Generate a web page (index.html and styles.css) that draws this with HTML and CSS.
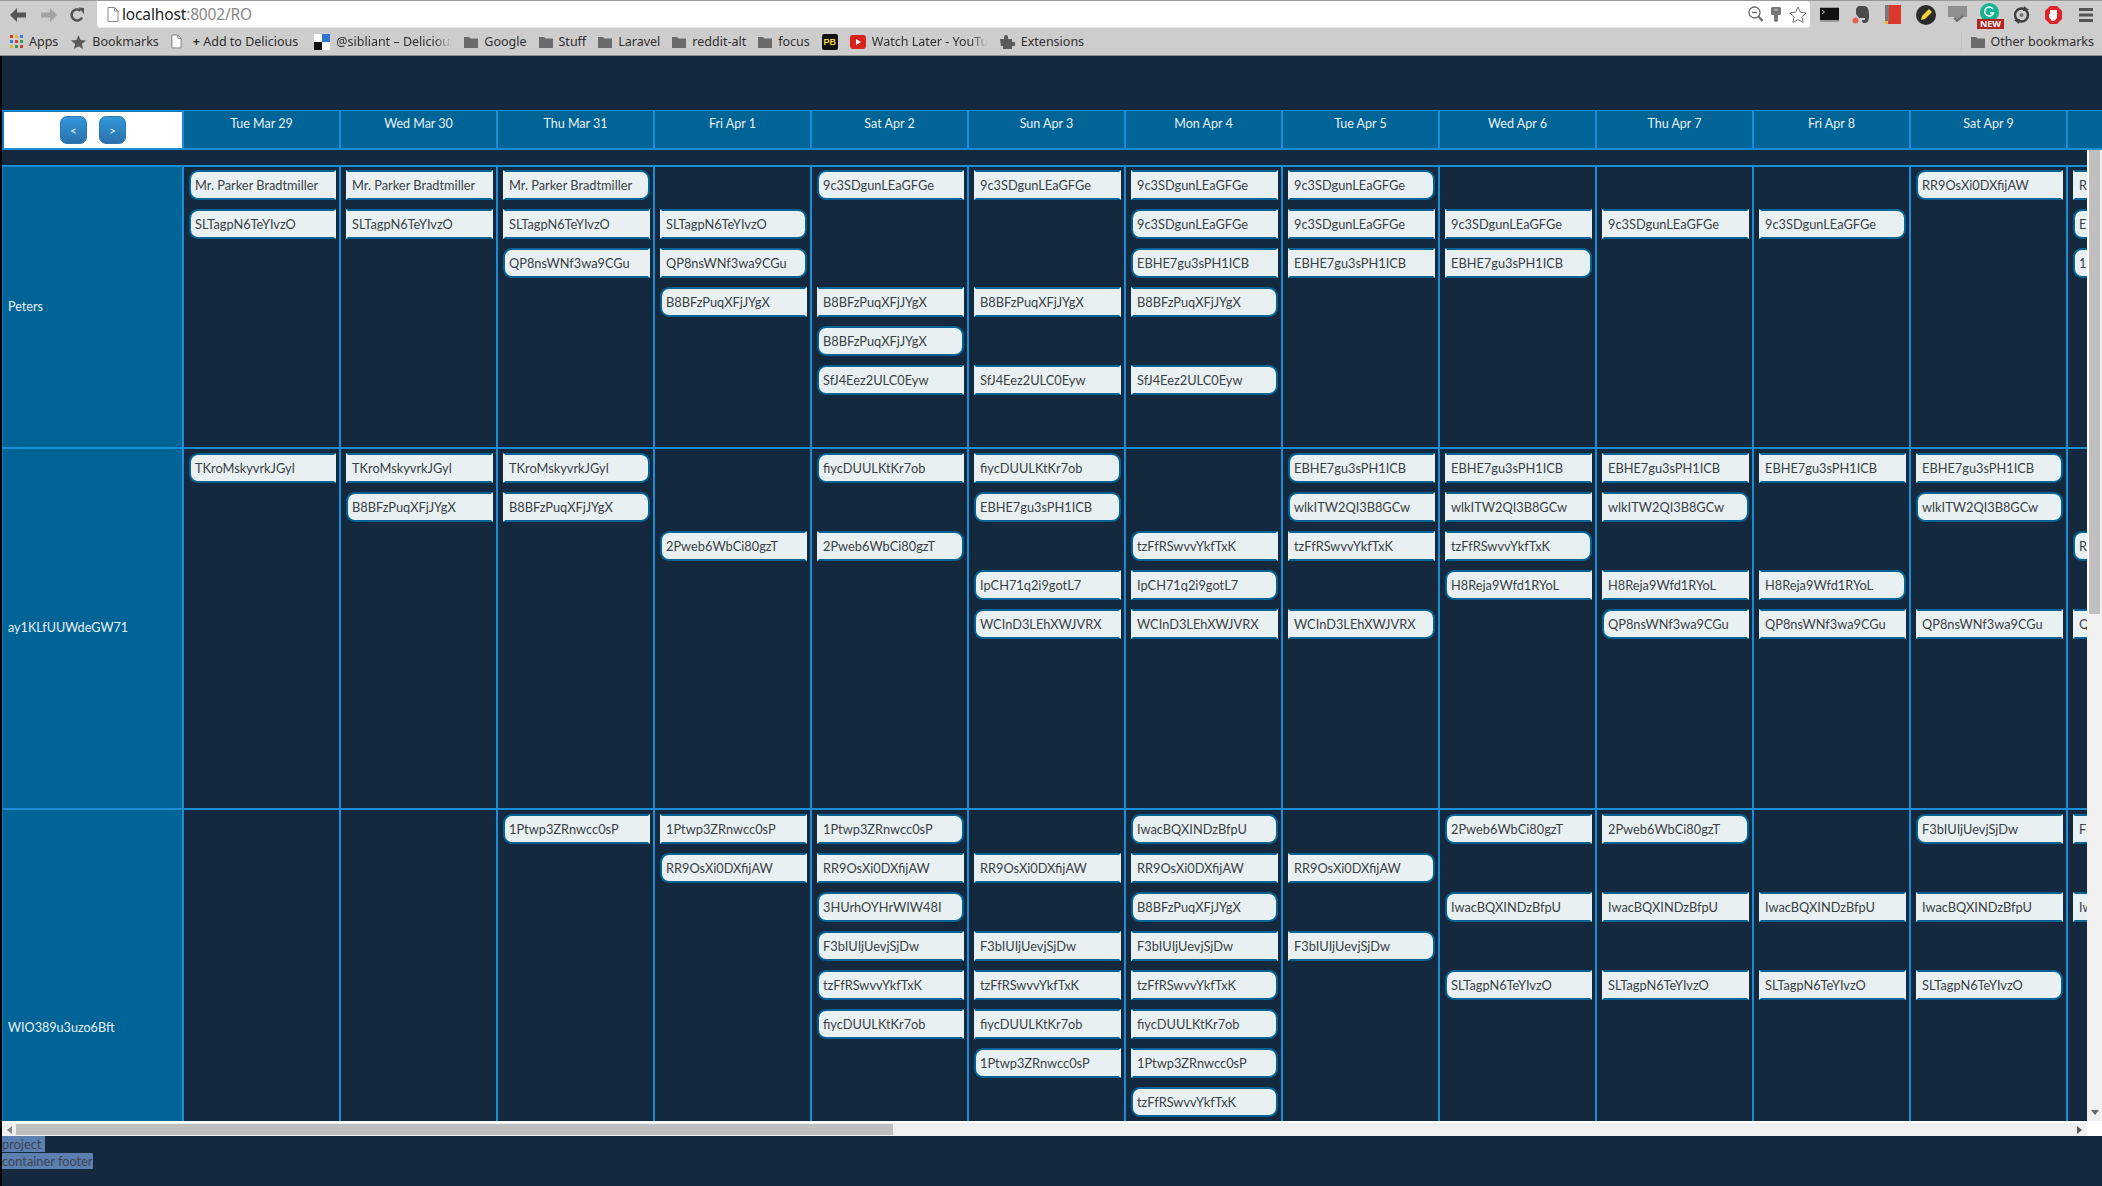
FILE: index.html
```html
<!DOCTYPE html>
<html lang="en">
<head>
  <meta charset="UTF-8" />
  <title>localhost:8002/RO</title>
  <link rel="stylesheet" href="styles.css">
</head>
<body>

  <svg class="defs" width="0" height="0">
    <symbol id="folder" viewBox="0 0 14 14"><path d="M0 2h5l1.500 1.500H14V13H0z" fill="#6b6b6b"/></symbol>
  </svg>

  <div class="browser">
    <div class="toolbar">
      <svg class="nav" width="18" height="16" viewBox="0 0 18 16"><path d="M1 8l7-7v4.500h9v5H8V15z" fill="#555"/></svg>
      <svg class="nav" width="18" height="16" viewBox="0 0 18 16"><path d="M17 8l-7-7v4.500H1v5h9V15z" fill="#a3a3a3"/></svg>
      <svg class="nav" width="16" height="16" viewBox="0 0 16 16"><path d="M13 10.500A5.500 5.500 0 1 1 11.500 3.600" fill="none" stroke="#555" stroke-width="2.600"/><path d="M9.500 0.500L15 1v6z" fill="#555"/></svg>
      <div class="omnibox">
        <svg width="12" height="15" viewBox="0 0 12 15"><path d="M1 .5h6.500L11 4v10.500H1z" fill="#fff" stroke="#888"/><path d="M7.500 .5V4H11" fill="none" stroke="#888"/></svg>
        <span class="url">localhost<span class="url-rest">:8002/RO</span></span>
        <span class="omni-right">
          <svg width="15" height="16" viewBox="0 0 15 16"><circle cx="6.500" cy="6.500" r="5.500" fill="none" stroke="#666" stroke-width="1.300"/><path d="M4 6.500h5" stroke="#666" stroke-width="1.300"/><path d="M10.500 10.500L14.500 15" stroke="#666" stroke-width="2"/></svg>
          <svg width="10" height="15" viewBox="0 0 10 15"><path d="M1 0h8l1 1v6l-1 1H7v6l-2 1-2-1V8H1L0 7V1z" fill="#777"/><path d="M3 2h4v2H3z" fill="#aaa"/></svg>
          <svg width="18" height="17" viewBox="0 0 18 17"><path d="M9 1l2.400 5.300 5.800.6-4.300 3.900 1.200 5.700L9 13.600l-5.100 2.900 1.200-5.700L.8 6.900l5.800-.6z" fill="#fff" stroke="#777"/></svg>
        </span>
      </div>
      <div class="extensions">
        <svg width="19" height="15" viewBox="0 0 19 15"><rect width="19" height="15" fill="#9a9a9a"/><rect y="1" width="19" height="12" fill="#111"/><path d="M2 3l2.500 2L2 7" fill="none" stroke="#ccc"/></svg>
        <svg width="18" height="19" viewBox="0 0 18 19"><path d="M6 1h6c4 0 5 4 5 9s-1 8-4 8-3-2-3-3h3v-2H7L4 9V4z" fill="#4a4a4a"/><circle cx="3.500" cy="15.500" r="3" fill="#e5604f"/></svg>
        <svg width="16" height="20" viewBox="0 0 16 20"><rect width="4" height="18" fill="#777"/><rect x="4" width="12" height="18" fill="#d9382a"/><rect y="18" width="16" height="1" fill="#d9382a"/><rect y="16" width="3" height="3" fill="#e8b92b"/></svg>
        <svg width="20" height="20" viewBox="0 0 20 20"><circle cx="10" cy="10" r="10" fill="#2b2b2b"/><path d="M5 15l1-4 7-7 3 3-7 7z" fill="#f2d33c"/></svg>
        <svg width="19" height="18" viewBox="0 0 19 18"><path d="M0 0h19v11h-6l-3 4-4-4H0z" fill="#8f8f8f"/><path d="M6 12l3 3 6-5" fill="none" stroke="#6d6d6d" stroke-width="2"/></svg>
        <span class="grammarly">
          <svg width="19" height="19" viewBox="0 0 19 19"><circle cx="9.500" cy="9.500" r="9.500" fill="#15b392"/><path d="M13 6a4.500 4.500 0 1 0 .5 4H10" fill="none" stroke="#fff" stroke-width="1.500"/></svg>
          <span class="new-badge">NEW</span>
        </span>
        <svg width="17" height="18" viewBox="0 0 17 18"><circle cx="8.500" cy="9" r="6.500" fill="none" stroke="#3f3f3f" stroke-width="2.400"/><circle cx="8.500" cy="9" r="2" fill="#777"/><path d="M11 0l5 4-6 1zM6 18l-5-4 6-1z" fill="#3f3f3f"/></svg>
        <svg width="17" height="18" viewBox="0 0 17 18"><path d="M5 0h7l5 5v8l-5 5H5l-5-5V5z" fill="#e0222a"/><path d="M5 8V4h7v8l-3 3H7L4 11V8z" fill="#fff"/></svg>
        <svg width="14" height="14" viewBox="0 0 14 14"><path d="M0 0h14v3H0zM0 5.500h14v3H0zM0 11h14v3H0z" fill="#555"/></svg>
      </div>
    </div>

    <div class="bookmarks">
      <a class="bm">
        <svg width="13" height="13" viewBox="0 0 13 13"><path d="M0 0h3v3H0z" fill="#d9382a"/><path d="M5 0h3v3H5z" fill="#e8b92b"/><path d="M10 0h3v3h-3z" fill="#3d7fe0"/><path d="M0 5h3v3H0z" fill="#3d7fe0"/><path d="M5 5h3v3H5z" fill="#d9382a"/><path d="M10 5h3v3h-3z" fill="#2d9e4f"/><path d="M0 10h3v3H0z" fill="#e8b92b"/><path d="M5 10h3v3H5z" fill="#2d9e4f"/><path d="M10 10h3v3h-3z" fill="#d9382a"/></svg>
        Apps
      </a>
      <a class="bm">
        <svg width="15" height="14" viewBox="0 0 15 14"><path d="M7.500 0l2 5 5.500.4-4.200 3.500 1.300 5.100-4.600-2.800L2.900 14l1.300-5.100L0 5.400 5.500 5z" fill="#5a5a5a"/></svg>
        Bookmarks
      </a>
      <a class="bm">
        <svg width="11" height="15" viewBox="0 0 12 15"><path d="M1 .5h6.500L11 4v10.500H1z" fill="#fff" stroke="#777"/><path d="M7.500 .5V4H11" fill="none" stroke="#777"/></svg>
        <span class="bm-plus"><b>+</b> Add to Delicious</span>
      </a>
      <a class="bm">
        <svg width="16" height="16" viewBox="0 0 16 16"><rect width="8" height="8" fill="#fff"/><rect x="8" width="8" height="8" fill="#3274d1"/><rect y="8" width="8" height="8" fill="#111"/><rect x="8" y="8" width="8" height="8" fill="#fff"/></svg>
        <span class="bm-fade">@sibliant – Delicious</span>
      </a>
      <a class="bm"><svg width="14" height="14"><use href="#folder"/></svg>Google</a>
      <a class="bm"><svg width="14" height="14"><use href="#folder"/></svg>Stuff</a>
      <a class="bm"><svg width="14" height="14"><use href="#folder"/></svg>Laravel</a>
      <a class="bm"><svg width="14" height="14"><use href="#folder"/></svg>reddit-alt</a>
      <a class="bm"><svg width="14" height="14"><use href="#folder"/></svg>focus</a>
      <a class="bm"><span class="pb">PB</span></a>
      <a class="bm">
        <svg width="16" height="14" viewBox="0 0 16 14"><rect width="16" height="14" rx="3" fill="#d9231f"/><path d="M6 4l5 3-5 3z" fill="#fff"/></svg>
        <span class="bm-fade">Watch Later - YouTube</span>
      </a>
      <a class="bm">
        <svg width="15" height="15" viewBox="0 0 15 15"><path d="M0 5h4V3a2 2 0 0 1 4 0v2h4v3h2a2 2 0 0 1 0 4h-2v3H3v-3H1z" fill="#5a5a5a"/></svg>
        Extensions
      </a>
      <span class="bm-sep"></span>
      <a class="bm"><svg width="14" height="14"><use href="#folder"/></svg>Other bookmarks</a>
    </div>
  </div>

  <div class="page">
    <div class="head-row">
      <div class="corner">
        <button class="nav-btn">&lt;</button>
        <button class="nav-btn">&gt;</button>
      </div>
      <div class="day">Tue Mar 29</div>
      <div class="day">Wed Mar 30</div>
      <div class="day">Thu Mar 31</div>
      <div class="day">Fri Apr 1</div>
      <div class="day">Sat Apr 2</div>
      <div class="day">Sun Apr 3</div>
      <div class="day">Mon Apr 4</div>
      <div class="day">Tue Apr 5</div>
      <div class="day">Wed Apr 6</div>
      <div class="day">Thu Apr 7</div>
      <div class="day">Fri Apr 8</div>
      <div class="day">Sat Apr 9</div>
      <div class="day">Sun Apr 10</div>
    </div>

    <div class="scroll-mid">
      <div class="viewport">

        <div class="row row-a">
          <div class="label">Peters</div>
          <div class="cell"><div class="ev l">Mr. Parker Bradtmiller</div><div class="ev l">SLTagpN6TeYIvzO</div></div>
          <div class="cell"><div class="ev">Mr. Parker Bradtmiller</div><div class="ev">SLTagpN6TeYIvzO</div></div>
          <div class="cell"><div class="ev r">Mr. Parker Bradtmiller</div><div class="ev">SLTagpN6TeYIvzO</div><div class="ev l">QP8nsWNf3wa9CGu</div></div>
          <div class="cell"><div class="sp"></div><div class="ev r">SLTagpN6TeYIvzO</div><div class="ev r">QP8nsWNf3wa9CGu</div><div class="ev l">B8BFzPuqXFjJYgX</div></div>
          <div class="cell"><div class="ev l">9c3SDgunLEaGFGe</div><div class="sp"></div><div class="sp"></div><div class="ev">B8BFzPuqXFjJYgX</div><div class="ev l r">B8BFzPuqXFjJYgX</div><div class="ev l">SfJ4Eez2ULC0Eyw</div></div>
          <div class="cell"><div class="ev">9c3SDgunLEaGFGe</div><div class="sp"></div><div class="sp"></div><div class="ev">B8BFzPuqXFjJYgX</div><div class="sp"></div><div class="ev">SfJ4Eez2ULC0Eyw</div></div>
          <div class="cell"><div class="ev">9c3SDgunLEaGFGe</div><div class="ev l">9c3SDgunLEaGFGe</div><div class="ev l">EBHE7gu3sPH1ICB</div><div class="ev r">B8BFzPuqXFjJYgX</div><div class="sp"></div><div class="ev r">SfJ4Eez2ULC0Eyw</div></div>
          <div class="cell"><div class="ev r">9c3SDgunLEaGFGe</div><div class="ev">9c3SDgunLEaGFGe</div><div class="ev">EBHE7gu3sPH1ICB</div></div>
          <div class="cell"><div class="sp"></div><div class="ev">9c3SDgunLEaGFGe</div><div class="ev r">EBHE7gu3sPH1ICB</div></div>
          <div class="cell"><div class="sp"></div><div class="ev">9c3SDgunLEaGFGe</div></div>
          <div class="cell"><div class="sp"></div><div class="ev r">9c3SDgunLEaGFGe</div></div>
          <div class="cell"><div class="ev l">RR9OsXi0DXfijAW</div></div>
          <div class="cell"><div class="ev">RR9OsXi0DXfijAW</div><div class="ev l">EBHE7gu3sPH1ICB</div><div class="ev l">1Ptwp3ZRnwcc0sP</div></div>
        </div>

        <div class="row row-b">
          <div class="label">ay1KLfUUWdeGW71</div>
          <div class="cell"><div class="ev l">TKroMskyvrkJGyl</div></div>
          <div class="cell"><div class="ev">TKroMskyvrkJGyl</div><div class="ev l">B8BFzPuqXFjJYgX</div></div>
          <div class="cell"><div class="ev r">TKroMskyvrkJGyl</div><div class="ev r">B8BFzPuqXFjJYgX</div></div>
          <div class="cell"><div class="sp"></div><div class="sp"></div><div class="ev l">2Pweb6WbCi80gzT</div></div>
          <div class="cell"><div class="ev l">fiycDUULKtKr7ob</div><div class="sp"></div><div class="ev r">2Pweb6WbCi80gzT</div></div>
          <div class="cell"><div class="ev r">fiycDUULKtKr7ob</div><div class="ev l r">EBHE7gu3sPH1ICB</div><div class="sp"></div><div class="ev l">IpCH71q2i9gotL7</div><div class="ev l">WCInD3LEhXWJVRX</div></div>
          <div class="cell"><div class="sp"></div><div class="sp"></div><div class="ev l">tzFfRSwvvYkfTxK</div><div class="ev r">IpCH71q2i9gotL7</div><div class="ev">WCInD3LEhXWJVRX</div></div>
          <div class="cell"><div class="ev l">EBHE7gu3sPH1ICB</div><div class="ev l">wlkITW2QI3B8GCw</div><div class="ev">tzFfRSwvvYkfTxK</div><div class="sp"></div><div class="ev r">WCInD3LEhXWJVRX</div></div>
          <div class="cell"><div class="ev">EBHE7gu3sPH1ICB</div><div class="ev">wlkITW2QI3B8GCw</div><div class="ev r">tzFfRSwvvYkfTxK</div><div class="ev l">H8Reja9Wfd1RYoL</div></div>
          <div class="cell"><div class="ev">EBHE7gu3sPH1ICB</div><div class="ev r">wlkITW2QI3B8GCw</div><div class="sp"></div><div class="ev">H8Reja9Wfd1RYoL</div><div class="ev l">QP8nsWNf3wa9CGu</div></div>
          <div class="cell"><div class="ev">EBHE7gu3sPH1ICB</div><div class="sp"></div><div class="sp"></div><div class="ev r">H8Reja9Wfd1RYoL</div><div class="ev">QP8nsWNf3wa9CGu</div></div>
          <div class="cell"><div class="ev r">EBHE7gu3sPH1ICB</div><div class="ev l r">wlkITW2QI3B8GCw</div><div class="sp"></div><div class="sp"></div><div class="ev">QP8nsWNf3wa9CGu</div></div>
          <div class="cell"><div class="sp"></div><div class="sp"></div><div class="ev l">RR9OsXi0DXfijAW</div><div class="sp"></div><div class="ev">QP8nsWNf3wa9CGu</div></div>
        </div>

        <div class="row row-c">
          <div class="label">WIO389u3uzo6Bft</div>
          <div class="cell"></div>
          <div class="cell"></div>
          <div class="cell"><div class="ev l">1Ptwp3ZRnwcc0sP</div></div>
          <div class="cell"><div class="ev">1Ptwp3ZRnwcc0sP</div><div class="ev l">RR9OsXi0DXfijAW</div></div>
          <div class="cell"><div class="ev r">1Ptwp3ZRnwcc0sP</div><div class="ev">RR9OsXi0DXfijAW</div><div class="ev l r">3HUrhOYHrWIW48I</div><div class="ev l">F3bIUIjUevjSjDw</div><div class="ev l">tzFfRSwvvYkfTxK</div><div class="ev l">fiycDUULKtKr7ob</div></div>
          <div class="cell"><div class="sp"></div><div class="ev">RR9OsXi0DXfijAW</div><div class="sp"></div><div class="ev">F3bIUIjUevjSjDw</div><div class="ev">tzFfRSwvvYkfTxK</div><div class="ev">fiycDUULKtKr7ob</div><div class="ev l">1Ptwp3ZRnwcc0sP</div></div>
          <div class="cell"><div class="ev l r">IwacBQXINDzBfpU</div><div class="ev">RR9OsXi0DXfijAW</div><div class="ev l r">B8BFzPuqXFjJYgX</div><div class="ev">F3bIUIjUevjSjDw</div><div class="ev r">tzFfRSwvvYkfTxK</div><div class="ev r">fiycDUULKtKr7ob</div><div class="ev r">1Ptwp3ZRnwcc0sP</div><div class="ev l r">tzFfRSwvvYkfTxK</div></div>
          <div class="cell"><div class="sp"></div><div class="ev r">RR9OsXi0DXfijAW</div><div class="sp"></div><div class="ev r">F3bIUIjUevjSjDw</div></div>
          <div class="cell"><div class="ev l">2Pweb6WbCi80gzT</div><div class="sp"></div><div class="ev l">IwacBQXINDzBfpU</div><div class="sp"></div><div class="ev l">SLTagpN6TeYIvzO</div></div>
          <div class="cell"><div class="ev r">2Pweb6WbCi80gzT</div><div class="sp"></div><div class="ev">IwacBQXINDzBfpU</div><div class="sp"></div><div class="ev">SLTagpN6TeYIvzO</div></div>
          <div class="cell"><div class="sp"></div><div class="sp"></div><div class="ev">IwacBQXINDzBfpU</div><div class="sp"></div><div class="ev">SLTagpN6TeYIvzO</div></div>
          <div class="cell"><div class="ev l">F3bIUIjUevjSjDw</div><div class="sp"></div><div class="ev">IwacBQXINDzBfpU</div><div class="sp"></div><div class="ev r">SLTagpN6TeYIvzO</div></div>
          <div class="cell"><div class="ev">F3bIUIjUevjSjDw</div><div class="sp"></div><div class="ev">IwacBQXINDzBfpU</div></div>
        </div>

      </div>
      <div class="vbar">
        <div class="vthumb"></div>
        <svg class="vdown" width="8" height="5" viewBox="0 0 8 5"><path d="M0 0h8L4 5z" fill="#666"/></svg>
      </div>
    </div>

    <div class="hbar">
      <svg class="harrow" width="5" height="8" viewBox="0 0 5 8"><path d="M5 0v8L0 4z" fill="#888"/></svg>
      <div class="hthumb"></div>
      <svg class="harrow-r" width="5" height="8" viewBox="0 0 5 8"><path d="M0 0v8l5-4z" fill="#555"/></svg>
      <div class="hcorner"></div>
    </div>

    <div class="foot">
      <div><span class="sel">project </span></div>
      <div><span class="sel">container footer</span></div>
    </div>
  </div>

</body>
</html>
```

FILE: styles.css
```css
html, body {
  margin: 0;
  height: 100%;
  overflow: hidden;
}
body {
  background-color: #000;
  font-family: Lato, sans-serif;
  font-size: 12.8px;
}
.defs {
  position: absolute;
}

/* browser chrome */
.browser {
  height: 56px;
  background-color: #cdcdcd;
  border-bottom: 1px solid #8f8f8f;
  box-sizing: border-box;
  font-family: "Noto Sans", sans-serif;
  color: #2e2e2e;
}
.toolbar {
  height: 28px;
  display: flex;
  align-items: center;
  padding-left: 9px;
  border-top: 1px solid #9a9a9a;
  box-sizing: border-box;
}
.nav {
  margin-right: 13px;
}
.nav + .nav {
  margin-right: 11px;
}
.nav + .nav + .nav {
  margin-right: 12px;
}
.omnibox {
  width: 1713px;
  height: 26px;
  margin-top: -1px;
  background-color: #fff;
  border-radius: 0 3px 3px 3px;
  box-shadow: 0 1px 0 #e8e8e8;
  display: flex;
  align-items: center;
  padding-left: 10px;
  box-sizing: border-box;
  flex: none;
}
.url {
  margin-left: 3px;
  font-size: 15.5px;
  letter-spacing: -0.15px;
  color: #222;
}
.url-rest {
  color: #888;
}
.omni-right {
  margin-left: auto;
  margin-right: 3px;
  display: flex;
  align-items: center;
  gap: 8px;
}
.extensions {
  display: flex;
  align-items: center;
  margin-left: 10px;
}
.extensions > :nth-child(2) { margin-left: 13px; }
.extensions > :nth-child(3) { margin-left: 15px; }
.extensions > :nth-child(4) { margin-left: 15px; }
.extensions > :nth-child(5) { margin-left: 12px; }
.extensions > :nth-child(6) { margin-left: 11px; }
.extensions > :nth-child(7) { margin-left: 12px; }
.extensions > :nth-child(8) { margin-left: 15px; }
.extensions > :nth-child(9) { margin-left: 17px; }
.grammarly {
  position: relative;
  width: 23px;
  height: 24px;
  display: flex;
  justify-content: center;
}
.new-badge {
  position: absolute;
  left: -1px;
  bottom: -2px;
  width: 27px;
  height: 10px;
  background-color: #b3241d;
  color: #fff;
  font-size: 9px;
  font-weight: 700;
  line-height: 10px;
  text-align: center;
}
.bookmarks {
  height: 27px;
  display: flex;
  align-items: center;
  padding-left: 10px;
  font-size: 12.5px;
}
.bm {
  display: flex;
  align-items: center;
  gap: 6px;
  margin-right: 12px;
  white-space: nowrap;
}
.bm:first-child {
  margin-right: 13px;
}
.bm-plus {
  margin-left: 5px;
  padding-right: 4px;
}
.bm-fade {
  width: 116px;
  overflow: hidden;
  -webkit-mask-image: linear-gradient(to right, #000 85%, transparent);
  mask-image: linear-gradient(to right, #000 85%, transparent);
}
.pb {
  width: 16px;
  height: 16px;
  border-radius: 2px;
  background-color: #111;
  color: #f2d33c;
  font-family: "Liberation Sans", sans-serif;
  font-size: 9px;
  font-weight: 700;
  line-height: 16px;
  text-align: center;
}
.bm-sep {
  margin-left: auto;
  margin-right: 9px;
  width: 1px;
  height: 18px;
  background-color: #b9c4d0;
}
.bm:last-child {
  margin-right: 8px;
}

/* page */
.page {
  margin-left: 2px;
  height: 1130px;
  background-color: #14293e;
  padding-top: 54px;
  box-sizing: border-box;
}
.head-row {
  display: flex;
  height: 40px;
  background-color: #006497;
  border-top: 1px solid #1b8dd6;
  border-bottom: 2px solid #1b8dd6;
  box-sizing: border-box;
  overflow: hidden;
}
.corner {
  width: 180px;
  flex: none;
  box-sizing: border-box;
  background-color: #fff;
  border: 2px solid #0f78b8;
  border-right: none;
  margin-top: -1px;
  margin-bottom: -2px;
  display: flex;
  justify-content: center;
  align-items: center;
  gap: 12px;
}
.nav-btn {
  width: 27px;
  height: 28px;
  padding: 0;
  border: 1px solid #2a78b4;
  border-radius: 7px;
  background: linear-gradient(#3498db, #2a70ab);
  color: #e8f0f2;
  font-family: Lato, sans-serif;
  font-size: 12px;
}
.day {
  width: 157px;
  flex: none;
  box-sizing: border-box;
  border-left: 2px solid #1b8dd6;
  padding-top: 5px;
  text-align: center;
  color: #e8f0f2;
  font-size: 12.5px;
  line-height: 16px;
}

.scroll-mid {
  display: flex;
  height: 971px;
}
.viewport {
  width: 2085px;
  flex: none;
  padding-top: 15px;
  box-sizing: border-box;
  overflow: hidden;
}
.row {
  display: flex;
  width: 2221px;
}
.row-a {
  height: 282px;
}
.row-b {
  height: 361px;
}
.row-c {
  height: 439px;
}
.label {
  width: 180px;
  flex: none;
  box-sizing: border-box;
  padding: 0 0 2px 5px;
  background-color: #006497;
  border-top: 2px solid #1b8dd6;
  border-left: 1px solid #0f78b8;
  display: flex;
  align-items: center;
  color: #e8f0f2;
  font-size: 12.6px;
}
.cell {
  width: 157px;
  flex: none;
  box-sizing: border-box;
  border-left: 2px solid #1b8dd6;
  border-top: 2px solid #1b8dd6;
  padding: 4px 3px 0 5px;
}
.row-a .cell {
  padding-top: 3px;
}
.ev, .sp {
  height: 30px;
  margin-bottom: 9px;
}
.ev {
  box-sizing: border-box;
  padding-left: 4px;
  background-color: #e8f0f2;
  border: 2px solid #006497;
  border-left-color: #e8f0f2;
  border-right-color: #e8f0f2;
  line-height: 26px;
  color: #3a3f44;
  white-space: nowrap;
  overflow: hidden;
}
.ev.l {
  border-left-color: #006497;
  border-top-left-radius: 9px;
  border-bottom-left-radius: 9px;
}
.ev.r {
  border-right-color: #006497;
  border-top-right-radius: 9px;
  border-bottom-right-radius: 9px;
}

/* fake scrollbars */
.vbar {
  width: 15px;
  flex: none;
  background-color: #f0f0f0;
  display: flex;
  flex-direction: column;
  align-items: center;
}
.vthumb {
  width: 11px;
  height: 464px;
  background-color: #bfbfbf;
  border-left: 2px solid #fff;
  border-right: 2px solid #f0f0f0;
}
.vdown {
  margin-top: auto;
  margin-bottom: 6px;
}
.hbar {
  height: 15px;
  display: flex;
  align-items: center;
  background-color: #f0f0f0;
  border-top: 2px solid #fff;
  box-sizing: border-box;
}
.harrow {
  margin-left: 5px;
  margin-right: 4px;
}
.hthumb {
  width: 877px;
  height: 11px;
  background-color: #bfbfbf;
}
.harrow-r {
  margin-left: auto;
  margin-right: 5px;
}
.hcorner {
  width: 15px;
  height: 15px;
  margin-top: -2px;
  background-color: #fff;
}

.foot {
  line-height: 17px;
  color: #3f4652;
}
.sel {
  background-color: #5a7fb0;
  white-space: pre;
}
```
